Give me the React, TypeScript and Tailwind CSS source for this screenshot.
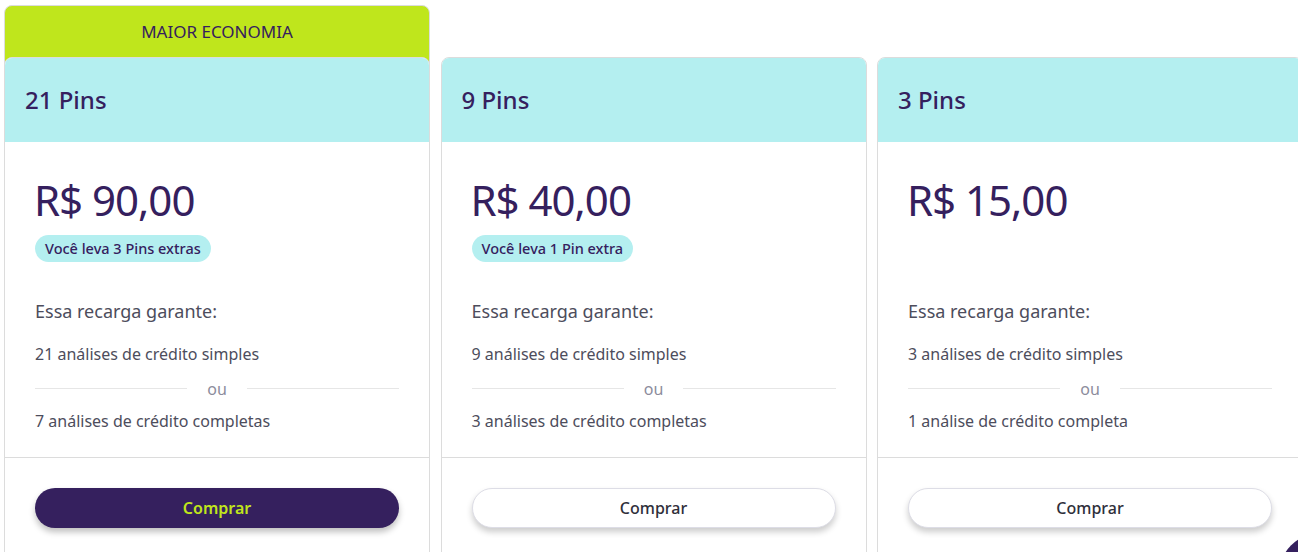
import React from "react";

type Plan = {
  pins: number;
  price: string;
  bonus?: string;
  simple: string;
  full: string;
  featured?: boolean;
};

const PLANS: Plan[] = [
  {
    pins: 21,
    price: "R$ 90,00",
    bonus: "Você leva 3 Pins extras",
    simple: "21 análises de crédito simples",
    full: "7 análises de crédito completas",
    featured: true,
  },
  {
    pins: 9,
    price: "R$ 40,00",
    bonus: "Você leva 1 Pin extra",
    simple: "9 análises de crédito simples",
    full: "3 análises de crédito completas",
  },
  {
    pins: 3,
    price: "R$ 15,00",
    simple: "3 análises de crédito simples",
    full: "1 análise de crédito completa",
  },
];

export default function App() {
  return (
    <div
      className="relative h-[552px] w-[1298px] overflow-hidden bg-white"
      style={{ fontFamily: '"Noto Sans", "Open Sans", sans-serif' }}
    >
      <div className="flex items-end gap-[10.5px] pl-[4px] pt-[5px]">
        {PLANS.map((p) =>
          p.featured ? (
            <div key={p.pins} className="w-[426px] shrink-0 rounded-t-lg border border-[#dcdcdc] bg-[#bfe61c]">
              <div className="flex h-[51px] items-center justify-center text-[17px] text-[#35205e]">MAIOR ECONOMIA</div>
              <PlanCard plan={p} inner />
            </div>
          ) : (
            <PlanCard key={p.pins} plan={p} />
          ),
        )}
      </div>

      {/* floating help button, mostly off-screen */}
      <div className="absolute left-[1280px] top-[534px] h-[76px] w-[76px] rounded-full bg-[#35205e]" />
    </div>
  );
}

function PlanCard({ plan, inner }: { plan: Plan; inner?: boolean }) {
  return (
    <div
      className={`shrink-0 overflow-hidden rounded-t-lg border border-[#dcdcdc] bg-white ${
        inner ? "-mx-px -mb-px" : "w-[426px]"
      }`}
    >
      <div className="flex h-[84px] items-center bg-[#b4eff0] px-[20px] text-2xl font-medium text-[#35205e]">
        {plan.pins} Pins
      </div>

      <div className="border-b border-[#dcdcdc] px-[30px] pb-[24px] pt-[35px]">
        <div className="-ml-[1px] text-[42px] leading-[46px] font-normal tracking-[-1px] text-[#35205e]">
          {plan.price}
        </div>
        {plan.bonus ? (
          <div className="mt-[12px] inline-flex h-[27px] items-center rounded-full bg-[#b4eff0] px-[10px] text-[14.5px] font-medium text-[#35205e]">
            {plan.bonus}
          </div>
        ) : (
          <div className="mt-[12px] h-[27px]" />
        )}
        <div className="mt-[36px] text-lg leading-[26px] text-[#4d4d5c]">Essa recarga garante:</div>
        <div className="mt-[18px] text-base leading-6 text-[#4d4d5c]">{plan.simple}</div>
        <div className="mt-[12px] flex h-[20px] items-center gap-[20px]">
          <div className="h-px flex-1 bg-[#e6e6e6]" />
          <span className="pt-[2px] text-base text-[#8c8c9c]">ou</span>
          <div className="h-px flex-1 bg-[#e6e6e6]" />
        </div>
        <div className="mt-[11px] text-base leading-6 text-[#4d4d5c]">{plan.full}</div>
      </div>

      <div className="px-[30px] pb-[30px] pt-[30px]">
        {plan.featured ? (
          <button className="h-[40px] w-full rounded-full bg-[#35205e] text-base font-semibold text-[#c0e51b] shadow-[0_4px_6px_rgba(0,0,0,0.25)]">
            Comprar
          </button>
        ) : (
          <button className="h-[40px] w-full rounded-full border border-[#dddde6] bg-white text-base font-medium text-[#2f2f3a] shadow-[0_4px_6px_rgba(0,0,0,0.2)]">
            Comprar
          </button>
        )}
      </div>
    </div>
  );
}
